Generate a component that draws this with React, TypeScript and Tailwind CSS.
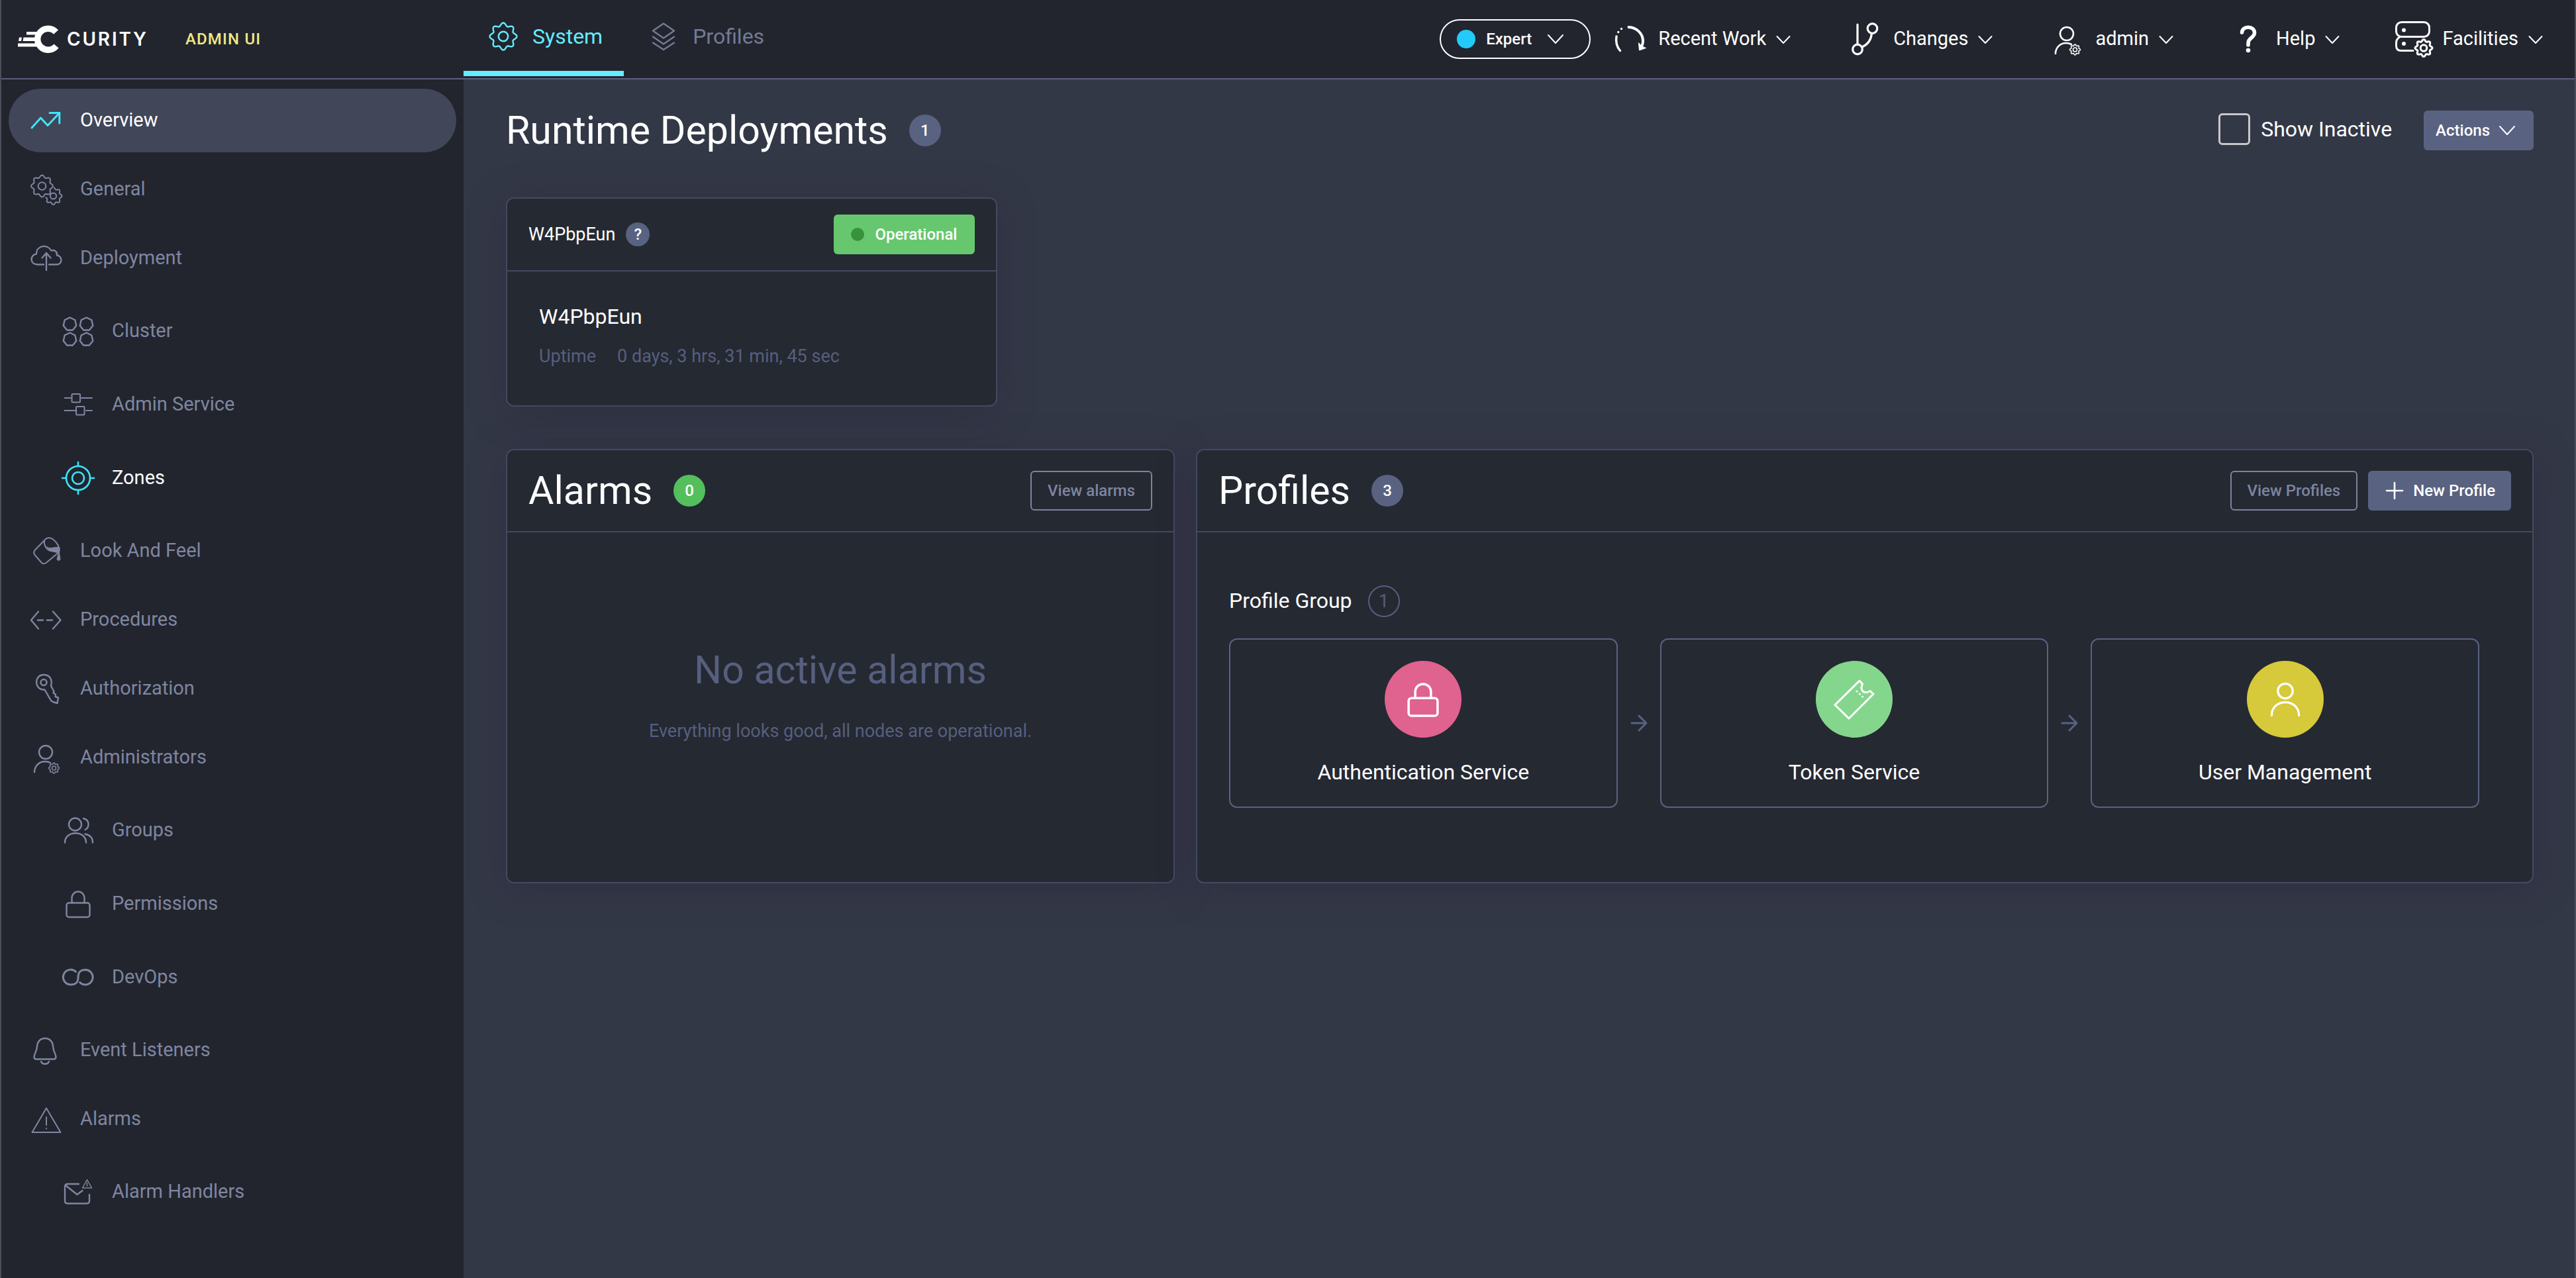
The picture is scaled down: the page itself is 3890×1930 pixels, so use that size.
import { Fragment, type ReactNode } from "react";

/** Closed or partial outline of an eight-lobed cog wheel. */
function cog(cx: number, cy: number, r: number, depth: number, from = 0, to = 360) {
  const points: string[] = [];
  for (let a = from; a <= to; a += 3) {
    const t = (a * Math.PI) / 180;
    const radius = r - depth / 2 + (depth / 2) * Math.cos(8 * t);
    points.push(`${(cx + radius * Math.cos(t)).toFixed(2)} ${(cy + radius * Math.sin(t)).toFixed(2)}`);
  }
  return `M${points.join("L")}${to - from >= 360 ? "Z" : ""}`;
}

function heptagon(cx: number, cy: number, r: number) {
  const points = Array.from({ length: 7 }, (_, i) => {
    const t = ((i * 360) / 7 - 90) * (Math.PI / 180);
    return `${(cx + r * Math.cos(t)).toFixed(2)} ${(cy + r * Math.sin(t)).toFixed(2)}`;
  });
  return `M${points.join("L")}Z`;
}

type IconProps = { children: ReactNode; box?: number; stroke?: number; className?: string };

function Icon({ children, box = 48, stroke = 2, className = "size-12" }: IconProps) {
  return (
    <svg
      viewBox={`0 0 ${box} ${box}`}
      fill="none"
      stroke="currentColor"
      strokeWidth={stroke}
      strokeLinecap="round"
      strokeLinejoin="round"
      aria-hidden="true"
      className={`shrink-0 overflow-visible ${className}`}
    >
      {children}
    </svg>
  );
}

function Chevron({ small = false }: { small?: boolean }) {
  return (
    <Icon box={24} stroke={2} className="size-6">
      <path d={small ? "M2.5 8L12 18L21.5 8" : "M1 6L12 18L23 6"} />
    </Icon>
  );
}

const UserCog = (
  <>
    <circle cx="23" cy="16" r="10" />
    <path d="M6 46C6 37 13 30 22 30Q26.500 30 30 32" />
    <path d={cog(35.5, 40, 8, 2)} strokeWidth="1.600" />
    <circle cx="35.500" cy="40" r="3" strokeWidth="1.600" />
  </>
);

const Lock = (
  <>
    <rect x="6.500" y="22.500" width="35" height="21.500" rx="3.500" />
    <path d="M14.500 22.500V15A9.500 9.500 0 0 1 33.500 15V22.500" />
  </>
);

type NavEntry = { label: string; icon: ReactNode; stroke?: number; active?: boolean; current?: boolean; children?: NavEntry[] };

const navigation: NavEntry[] = [
  {
    label: "Overview",
    current: true,
    stroke: 3,
    icon: (
      <>
        <path d="M2 35L15.500 20L26 31.500L43.500 13" />
        <path d="M29 12.500H43.800V28" strokeLinejoin="miter" />
      </>
    ),
  },
  {
    label: "General",
    icon: (
      <>
        <path d={cog(17.5, 19, 16.5, 3.4)} />
        <circle cx="17.500" cy="19" r="5.800" />
        <path d={cog(34.5, 34, 13, 2.8, -84, 168)} />
        <circle cx="34.500" cy="34" r="4.600" />
      </>
    ),
  },
  {
    label: "Deployment",
    stroke: 2.4,
    icon: (
      <>
        <path d="M20 33.500H11C-1.500 33.500-1 18.500 9 17.500C9 4.500 25.500 2 31.500 12.500C36.500 10.500 41 14.500 40 19.500C48.500 21 49 33.500 39 33.500H28" />
        <path d="M24 42V16M17.500 23.500L24 16L30.500 23.500" />
      </>
    ),
    children: [
      {
        label: "Cluster",
        stroke: 2.4,
        icon: (
          <path d={heptagon(11.5, 13.5, 10) + heptagon(36.5, 13.5, 10) + heptagon(11.5, 36.5, 10) + heptagon(36.5, 36.5, 10)} />
        ),
      },
      {
        label: "Admin Service",
        icon: (
          <>
            <path d="M3.500 14H13M29 14H45M3.500 33H20M36 33H45" />
            <rect x="14.500" y="8" width="12.500" height="12.500" rx="1" />
            <rect x="21" y="27" width="12.500" height="12.500" rx="1" />
          </>
        ),
      },
      {
        label: "Zones",
        active: true,
        stroke: 2.6,
        icon: (
          <>
            <circle cx="24" cy="24" r="18" />
            <circle cx="24" cy="24" r="9" />
            <path d="M24 0V6M24 42V48M0 24H6M42 24H48" />
          </>
        ),
      },
    ],
  },
  {
    label: "Look And Feel",
    icon: (
      <>
        <path d="M21 8L6.500 23Q4 26.500 6.500 30L17 42Q20 44.500 23.500 42L43 26C46 17 34 2 26 4.500Q23 5 21 8C20 14 23 21 29 23.500L43 26" />
        <path d="M25 18C30 22 36 17 44 19L43.500 27L45 37Q42 40 40 36.500L42.500 27L30 24Z" fill="currentColor" strokeWidth="1" />
      </>
    ),
  },
  {
    label: "Procedures",
    stroke: 2.4,
    icon: <path d="M12 11.500L1 24.500L12 37.500M34 11.500L45.500 24.500L34 37.500M11 24.500H19M25 24.500H33" />,
  },
  {
    label: "Authorization",
    stroke: 2.4,
    icon: (
      <>
        <path d="M19 25.500C5 24 6 2.500 20.500 3C31 3.500 33 12 31 20L35.500 28L34.500 30.500L38 32.500L37.500 36L42 37.500L40.500 46L34 44L31 42L21.500 25.500Z" />
        <circle cx="20" cy="14.500" r="4.500" />
      </>
    ),
  },
  {
    label: "Administrators",
    stroke: 2.4,
    icon: UserCog,
    children: [
      {
        label: "Groups",
        stroke: 2.4,
        icon: (
          <>
            <circle cx="19.500" cy="15" r="9.500" />
            <path d="M4 42.500C4 23.500 36 23.500 36 42.500M32 6C41.500 8 41.500 20 34.500 23M34.500 29.500C42 31 46 36 46 42.500" />
          </>
        ),
      },
      { label: "Permissions", stroke: 2.4, icon: Lock },
      {
        label: "DevOps",
        stroke: 3,
        icon: (
          <path d="M20.500 15.500A11.300 11.300 0 1 0 12.500 35C23 35 24 29 24 24C24 19 25 12.500 35.500 12.500A11.300 11.300 0 1 1 26.500 31.500" />
        ),
      },
    ],
  },
  {
    label: "Event Listeners",
    stroke: 2.4,
    icon: (
      <path d="M22 6C29 6 33.500 11 34 18C34.500 26 38 29 38.500 34Q38.500 37.500 35 37.500H9Q5.500 37.500 5.500 34C6 29 9.500 26 10 18C10.500 11 15 6 22 6ZM16 41C18 46 26 46 28 41" />
    ),
  },
  {
    label: "Alarms",
    icon: <path d="M24 7.500L45.500 44H2.500ZM24 21V33M24 38V38.500" />,
    children: [
      {
        label: "Alarm Handlers",
        stroke: 2.4,
        icon: (
          <>
            <path d="M25 12H8Q4 12 4 16V37.500Q4 41.500 8 41.500H37Q41 41.500 41 37.500V28M5 14L22.500 28L30.500 22" />
            <path d="M37.500 5.500L44.500 18H30.500ZM37.500 10V15" strokeWidth="1.500" />
          </>
        ),
      },
    ],
  },
];

function NavItem({ entry, nested = false }: { entry: NavEntry; nested?: boolean }) {
  const lit = entry.current || entry.active;
  return (
    <li>
      <a
        href="#"
        aria-current={entry.current ? "page" : undefined}
        className={`flex h-24 items-center gap-[27px] rounded-full pr-8 ${nested ? "pl-[81px]" : "pl-[33px]"} ${
          entry.current ? "bg-[#414658]" : ""
        } ${lit ? "text-white" : "text-[#7f86a0]"}`}
      >
        <Icon stroke={entry.stroke} className={`size-12 ${lit ? "text-[#3ce5fb]" : ""}`}>
          {entry.icon}
        </Icon>
        <span className="pb-0.5 text-[29px] leading-8">{entry.label}</span>
      </a>
      {entry.children && (
        <ul className="flex flex-col gap-[15px] pt-3.5 pb-1.5">
          {entry.children.map((child) => (
            <NavItem key={child.label} entry={child} nested />
          ))}
        </ul>
      )}
    </li>
  );
}

const menus: { label: string; icon: ReactNode }[] = [
  {
    label: "Recent Work",
    icon: (
      <Icon stroke={3.4}>
        <path d="M3 20Q1 33 8.500 41.500M5.800 13.500V13.600M10.500 8.500V8.600" />
        <path d="M21.500 6C34 6.500 43 16 43 27Q43 31 41.500 34" strokeWidth="4" />
        <path d="M36.500 30L37.500 41L47.500 37.500L41.500 35Z" fill="currentColor" strokeWidth="1" />
      </Icon>
    ),
  },
  {
    label: "Changes",
    icon: (
      <Icon stroke={3.2}>
        <circle cx="12" cy="39.500" r="7.300" />
        <circle cx="34.500" cy="8" r="7.300" />
        <path d="M12 2V32M33.500 15.500C32.500 25 28 32 19 36" />
      </Icon>
    ),
  },
  { label: "admin", icon: <Icon stroke={2.6}>{UserCog}</Icon> },
  {
    label: "Help",
    icon: (
      <Icon stroke={5.6}>
        <path d="M14.500 14C15.500 3.500 33.500 3.500 33.500 14.500C33.500 22 24 22 24 30V33" />
        <circle cx="24" cy="41" r="3.300" fill="currentColor" stroke="none" />
      </Icon>
    ),
  },
  {
    label: "Facilities",
    icon: (
      <Icon box={60} stroke={3} className="size-[60px]">
        <rect x="2.500" y="4.500" width="50" height="22" rx="8" />
        <path d="M8 27C3.500 29 2.500 32 2.500 36V40Q2.500 47.500 10 47.500H28" />
        <circle cx="14" cy="16.500" r="3" fill="currentColor" stroke="none" />
        <circle cx="14" cy="37" r="3" fill="currentColor" stroke="none" />
        <path d={cog(44, 43.5, 13, 3)} />
        <circle cx="44" cy="43.500" r="4.800" />
      </Icon>
    ),
  },
];

function Logo() {
  return (
    <div className="flex items-center gap-3">
      <svg viewBox="0 0 62 42" aria-hidden="true" className="h-[42px] w-[62px] shrink-0">
        <path d="M57.500 10.500A16 16 0 1 0 58 31.500" fill="none" stroke="#fff" strokeWidth="9.500" />
        <path d="M13 10H28V14.500H13ZM8.500 18.500H26V24H7.500ZM2 18.500H6L5 24H1ZM0 27.500H28V32.500H0Z" fill="#fff" />
      </svg>
      <span className="font-['Inter',sans-serif] text-[28px] leading-8 font-semibold tracking-widest text-white">
        CURITY
      </span>
    </div>
  );
}

function Count({ children, green = false }: { children: ReactNode; green?: boolean }) {
  return (
    <span
      className={`flex size-12 items-center justify-center rounded-full text-2xl font-medium text-white ${
        green ? "bg-[#54bf5d]" : "bg-[#596280]"
      }`}
    >
      {children}
    </span>
  );
}

function Card({ header, children }: { header: ReactNode; children: ReactNode }) {
  return (
    <section className="flex flex-col rounded-xl border-2 border-[#434960] bg-[#252932] shadow-[0_8px_56px_rgba(44,36,54,0.4)]">
      {header}
      {children}
    </section>
  );
}

const profiles = [
  {
    label: "Authentication Service",
    tone: "bg-[#e0628f]",
    icon: (
      <Icon stroke={2.8} className="size-[60px]">
        {Lock}
      </Icon>
    ),
  },
  {
    label: "Token Service",
    tone: "bg-[#85d68d]",
    icon: (
      <Icon box={64} stroke={3} className="size-16">
        <path d="M40 4L44.500 9C40 19 47 25 56 19.500L61 24L24 61L3 40.500Z" />
        <path d="M36 20V20.100M40.300 24V24.100M44.600 28V28.100" />
      </Icon>
    ),
  },
  {
    label: "User Management",
    tone: "bg-[#d6c93a]",
    icon: (
      <Icon stroke={2.6} className="size-[60px]">
        <circle cx="24" cy="14" r="9" />
        <path d="M7.500 43.500C7.500 22.500 40.500 22.500 40.500 43.500" />
      </Icon>
    ),
  },
];

const outlineButton =
  "h-[60px] rounded-md border-2 border-[#7d839d] px-6 text-2xl font-medium text-[#7d84a0]";

export default function App() {
  return (
    <div className="flex min-h-screen flex-col border-x-2 border-[#4b4e58] bg-[#333847] font-['Roboto',sans-serif] text-white">
      <header className="flex h-[120px] shrink-0 border-b-2 border-[#596080] bg-[#22252e]">
        <div className="flex w-[698px] shrink-0 items-center gap-14 pl-[25px]">
          <Logo />
          <span className="text-2xl font-medium tracking-wider text-[#f0e984]">ADMIN UI</span>
        </div>
        <nav aria-label="Sections" className="mb-[3px] flex">
          <a
            href="#"
            aria-current="page"
            className="flex items-center gap-5 border-b-8 border-[#66ebff] pt-[3px] pr-8 pl-9 text-[32px] text-[#66ebff]"
          >
            <Icon stroke={2.4}>
              <path d={cog(24, 24, 20.5, 4.6)} />
              <circle cx="24" cy="24" r="7.200" />
            </Icon>
            System
          </a>
          <a
            href="#"
            className="flex items-center gap-5 border-b-8 border-transparent pt-[3px] pr-8 pl-9 text-[32px] text-[#737b94]"
          >
            <Icon stroke={2.4}>
              <path d="M24 4.500L40 15.500L24 26.500L8 15.500ZM8 24.500L24 35.500L40 24.500M8 33.500L24 44L40 33.500" />
            </Icon>
            Profiles
          </a>
        </nav>
        <div className="ml-auto flex items-center gap-8 pr-[47px]">
          <button className="flex h-[60px] items-center rounded-full border-2 border-white pr-[39px] pl-6 text-2xl font-medium">
            <span className="mr-4 size-7 rounded-full bg-[#23cbfb]" />
            <span className="mr-6">Expert</span>
            <Chevron />
          </button>
          <div className="flex items-center gap-[84px]">
            {menus.map((menu) => (
              <button key={menu.label} className="flex items-center gap-3.5 text-[29px]">
                <span className="flex w-14 justify-center">{menu.icon}</span>
                <span>{menu.label}</span>
                <Chevron small />
              </button>
            ))}
          </div>
        </div>
      </header>

      <div className="flex grow">
        <aside className="w-[698px] shrink-0 bg-[#22252e] px-[11px] pt-3.5">
          <nav aria-label="System">
            <ul className="flex flex-col gap-2">
              {navigation.map((entry) => (
                <NavItem key={entry.label} entry={entry} />
              ))}
            </ul>
          </nav>
        </aside>

        <main className="grow pt-[47px] pr-[62px] pl-16">
          <div className="mb-[71px] flex h-[60px] items-center">
            <h1 className="mr-8 text-[59px]">Runtime Deployments</h1>
            <Count>1</Count>
            <label className="ml-auto flex items-center gap-4 pb-1 text-[32px]">
              <input
                type="checkbox"
                className="size-12 appearance-none rounded-md border-[3px] border-[#c8c8c8] checked:bg-[#596280]"
              />
              Show Inactive
            </label>
            <button className="ml-12 flex h-[60px] items-center gap-3.5 rounded-md bg-[#596280] pr-7 pl-[18px] text-2xl font-medium">
              Actions
              <Chevron />
            </button>
          </div>

          <div className="mb-16 grid grid-cols-4 gap-8">
            <Card
              header={
                <div className="flex items-center border-b-2 border-[#434960] px-8 py-6">
                  <h2 className="mr-4 text-[27px]">W4PbpEun</h2>
                  <button
                    aria-label="About this deployment"
                    className="flex size-9 items-center justify-center rounded-full bg-[#596280] text-2xl font-medium"
                  >
                    ?
                  </button>
                  <span className="ml-auto flex h-[60px] items-center gap-4 rounded-md bg-[#67c76e] px-[26px] text-2xl font-medium">
                    <span className="size-5 rounded-full bg-[#38923c]" />
                    Operational
                  </span>
                </div>
              }
            >
              <div className="px-12 pt-12 pb-[54px]">
                <h3 className="mb-5 text-[32px] leading-10">W4PbpEun</h3>
                <dl className="flex gap-8 text-[27px] leading-10 text-[#565f7e]">
                  <dt>Uptime</dt>
                  <dd>0 days, 3 hrs, 31 min, 45 sec</dd>
                </dl>
              </div>
            </Card>
          </div>

          <div className="grid grid-cols-[1fr_2fr] gap-8">
            <Card
              header={
                <div className="flex h-[124px] items-center border-b-2 border-[#434960] px-8">
                  <h2 className="mr-8 text-[59px]">Alarms</h2>
                  <Count green>0</Count>
                  <button className={`ml-auto ${outlineButton}`}>View alarms</button>
                </div>
              }
            >
              <div className="flex grow flex-col items-center justify-center gap-9 pb-9 text-[#565f7e]">
                <p className="text-[59px] leading-[72px]">No active alarms</p>
                <p className="text-[27px] leading-10">Everything looks good, all nodes are operational.</p>
              </div>
            </Card>

            <Card
              header={
                <div className="flex h-[124px] items-center border-b-2 border-[#434960] px-8">
                  <h2 className="mr-8 text-[59px]">Profiles</h2>
                  <Count>3</Count>
                  <button className={`mr-4 ml-auto ${outlineButton}`}>View Profiles</button>
                  <button className="flex h-[60px] items-center gap-3 rounded-md bg-[#596280] px-6 text-2xl font-medium">
                    <Icon box={32} stroke={2.6} className="size-8">
                      <path d="M16 4V28M4 16H28" />
                    </Icon>
                    New Profile
                  </button>
                </div>
              }
            >
              <div className="pt-20 pr-20 pb-28 pl-12">
                <div className="mb-8 flex h-12 items-center gap-6">
                  <h3 className="pb-0.5 text-[32px] leading-10">Profile Group</h3>
                  <span className="flex size-12 items-center justify-center rounded-full border-2 border-[#565f7e] text-[27px] text-[#565f7e]">
                    1
                  </span>
                </div>
                <div className="flex items-center">
                  {profiles.map((profile, index) => (
                    <Fragment key={profile.label}>
                      {index > 0 && (
                        <span className="flex w-16 shrink-0 justify-center text-[#596280]">
                          <Icon box={24} stroke={3} className="size-6">
                            <path d="M1 12H23M12 1L23 12L12 23" />
                          </Icon>
                        </span>
                      )}
                      <a
                        href="#"
                        className="flex flex-1 flex-col items-center gap-7 rounded-xl border-2 border-[#596280] pt-8 pb-7"
                      >
                        <span className={`flex size-29 items-center justify-center rounded-full ${profile.tone}`}>
                          {profile.icon}
                        </span>
                        <span className="text-[32px] leading-12">{profile.label}</span>
                      </a>
                    </Fragment>
                  ))}
                </div>
              </div>
            </Card>
          </div>
        </main>
      </div>
    </div>
  );
}
